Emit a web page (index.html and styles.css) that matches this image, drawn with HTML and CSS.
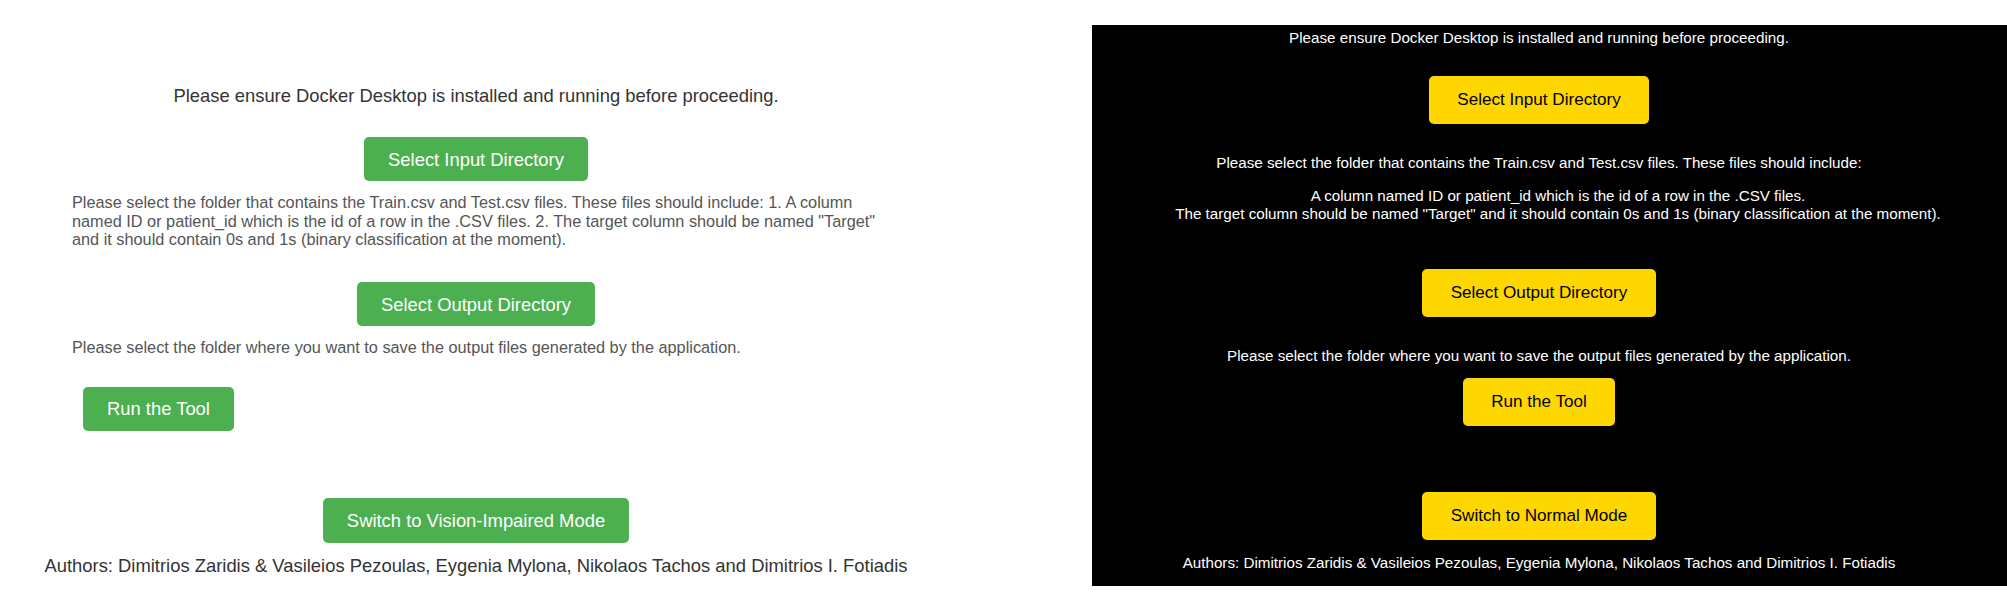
FILE: index.html
```html
<!DOCTYPE html>
<html lang="en">
<head>
<meta charset="utf-8">
<title>Docker Tool</title>
<link rel="stylesheet" href="styles.css">
</head>
<body>
  <section class="panel panel-normal">
    <p class="notice">Please ensure Docker Desktop is installed and running before proceeding.</p>
    <div class="action action-input"><button class="btn">Select Input Directory</button></div>
    <p class="help help-input">Please select the folder that contains the Train.csv and Test.csv files. These files should include: 1. A column named ID or patient_id which is the id of a row in the .CSV files. 2. The target column should be named "Target" and it should contain 0s and 1s (binary classification at the moment).</p>
    <div class="action action-output"><button class="btn">Select Output Directory</button></div>
    <p class="help help-output">Please select the folder where you want to save the output files generated by the application.</p>
    <div class="action action-run"><button class="btn">Run the Tool</button></div>
    <div class="action action-switch"><button class="btn">Switch to Vision-Impaired Mode</button></div>
    <p class="authors">Authors: Dimitrios Zaridis &amp; Vasileios Pezoulas, Eygenia Mylona, Nikolaos Tachos and Dimitrios I. Fotiadis</p>
  </section>

  <section class="panel panel-contrast">
    <p class="notice">Please ensure Docker Desktop is installed and running before proceeding.</p>
    <div class="action action-input"><button class="btn">Select Input Directory</button></div>
    <p class="help help-input">Please select the folder that contains the Train.csv and Test.csv files. These files should include:</p>
    <ol class="help help-list">
      <li>A column named ID or patient_id which is the id of a row in the .CSV files.</li>
      <li>The target column should be named "Target" and it should contain 0s and 1s (binary classification at the moment).</li>
    </ol>
    <div class="action action-output"><button class="btn">Select Output Directory</button></div>
    <p class="help help-output">Please select the folder where you want to save the output files generated by the application.</p>
    <div class="action action-run"><button class="btn">Run the Tool</button></div>
    <div class="action action-switch"><button class="btn">Switch to Normal Mode</button></div>
    <p class="authors">Authors: Dimitrios Zaridis &amp; Vasileios Pezoulas, Eygenia Mylona, Nikolaos Tachos and Dimitrios I. Fotiadis</p>
  </section>
</body>
</html>
```

FILE: styles.css
```css
* {
  box-sizing: border-box;
}

html, body {
  margin: 0;
  padding: 0;
  background: #ffffff;
}

body {
  width: 2007px;
  height: 594px;
  display: flex;
  align-items: flex-start;
  font-family: "Liberation Sans", Arial, sans-serif;
  overflow: hidden;
}

p {
  margin: 0;
}

.action {
  display: flex;
  justify-content: center;
}

.btn {
  font-family: "Liberation Sans", Arial, sans-serif;
  border: none;
  border-radius: 5px;
  cursor: pointer;
  white-space: nowrap;
}

/* ---------- Normal mode ---------- */
.panel-normal {
  width: 952px;
  flex: none;
}

.panel-normal .notice {
  margin-top: 85px;
  font-size: 18.4px;
  line-height: 21px;
  color: #333333;
  text-align: center;
}

.panel-normal .btn {
  background: #4caf50;
  color: #ffffff;
  font-size: 18.4px;
  line-height: 21px;
  padding: 11.5px 24px;
}

.panel-normal .action-input {
  margin-top: 31px;
}

.panel-normal .help {
  margin-left: 72px;
  width: 824px;
  font-size: 16.3px;
  line-height: 18.5px;
  color: #555555;
}

.panel-normal .help-input {
  margin-top: 12px;
}

.panel-normal .action-output {
  margin-top: 33.5px;
}

.panel-normal .help-output {
  margin-top: 12px;
}

.panel-normal .action-run {
  margin-top: 30px;
  justify-content: flex-start;
  padding-left: 83px;
}

.panel-normal .action-switch {
  margin-top: 67.5px;
}

.panel-normal .action-switch .btn {
  padding-top: 12px;
  padding-bottom: 12px;
}

.panel-normal .authors {
  margin-top: 12px;
  font-size: 18.4px;
  line-height: 21px;
  color: #333333;
  text-align: center;
}

/* ---------- Vision-impaired mode ---------- */
.panel-contrast {
  flex: none;
  width: 915px;
  height: 561px;
  margin-top: 25px;
  margin-left: 140px;
  padding-right: 21px;
  background: #000000;
  color: #ffffff;
  text-align: center;
  font-size: 15.2px;
  line-height: 17.5px;
}

.panel-contrast .notice {
  padding-top: 4.25px;
}

.panel-contrast .btn {
  background: #ffd700;
  color: #000000;
  font-size: 17.1px;
  line-height: 20px;
  padding: 14px 28.5px;
}

.panel-contrast .action-input {
  margin-top: 29.25px;
}

.panel-contrast .help-input {
  margin-top: 30.25px;
}

.panel-contrast .help-list {
  margin: 15.5px 0 0;
  padding: 0 0 0 38px;
  list-style: none;
}

.panel-contrast .action-output {
  margin-top: 46.75px;
}

.panel-contrast .help-output {
  margin-top: 30.25px;
}

.panel-contrast .action-run {
  margin-top: 13.25px;
}

.panel-contrast .action-switch {
  margin-top: 66px;
}

.panel-contrast .authors {
  margin-top: 14.25px;
}
```
